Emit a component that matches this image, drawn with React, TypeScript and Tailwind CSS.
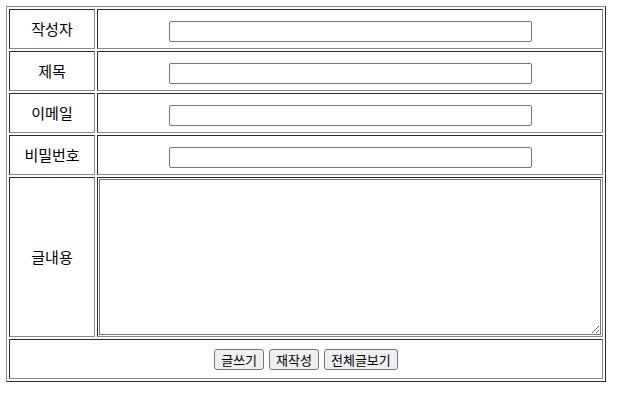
import React from 'react';

const fields = ['작성자', '제목', '이메일', '비밀번호'];

const cellBorder = 'border border-t-[#2b2b2b] border-l-[#2b2b2b] border-b-[#8a8a8a] border-r-[#8a8a8a] p-px';
const buttonStyles = 'h-[21px] px-[6px] bg-[#efefef] border border-[#767676] rounded-[3px] text-[13px] leading-none text-black';

export default function App() {
  return (
    <div className="bg-white w-[621px] h-[399px] pt-[6px] pl-[6px] font-['Noto_Sans_CJK_KR',sans-serif] text-black">
      <form onSubmit={(e) => e.preventDefault()}>
        <table className="w-[600px] table-fixed border-separate border-spacing-[2px] border border-t-[#8a8a8a] border-l-[#8a8a8a] border-b-[#2b2b2b] border-r-[#2b2b2b]">
          <tbody>
            {fields.map((label) => (
              <tr key={label}>
                <td className={`${cellBorder} w-[86px] h-[40px] text-center text-[15px]`}>{label}</td>
                <td className={`${cellBorder} h-[40px] text-center`}>
                  <input
                    type={label === '비밀번호' ? 'password' : 'text'}
                    className="w-[363px] h-[21px] border border-[#767676] rounded-[2px] bg-white align-middle"
                  />
                </td>
              </tr>
            ))}
            <tr>
              <td className={`${cellBorder} w-[86px] h-[160px] text-center text-[15px]`}>글내용</td>
              <td className={`${cellBorder} h-[160px]`}>
                <textarea className="block w-full h-[156px] border border-[#767676] bg-white" />
              </td>
            </tr>
            <tr>
              <td colSpan={2} className={`${cellBorder} h-[40px]`}>
                <div className="flex justify-center gap-[5px]">
                  <button type="submit" className={buttonStyles}>글쓰기</button>
                  <button type="reset" className={buttonStyles}>재작성</button>
                  <button type="button" className={buttonStyles}>전체글보기</button>
                </div>
              </td>
            </tr>
          </tbody>
        </table>
      </form>
    </div>
  );
}
